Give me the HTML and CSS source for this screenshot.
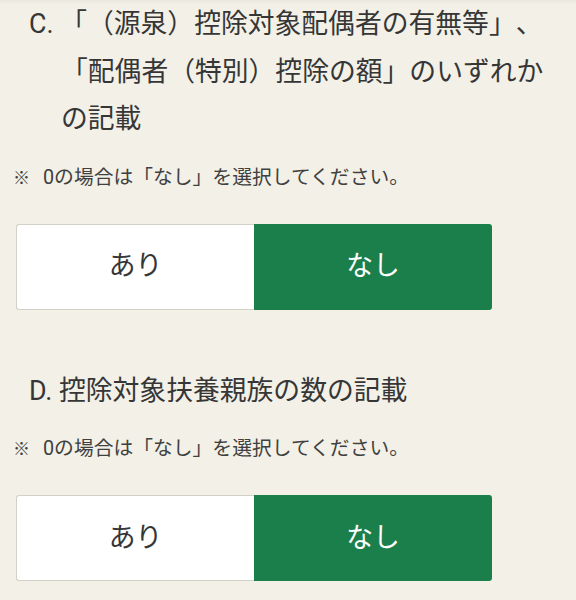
FILE: index.html
```html
<!DOCTYPE html>
<html lang="ja">
<head>
<meta charset="utf-8">
<link rel="stylesheet" href="styles.css">
</head>
<body>
<div class="page">
  <section class="item item-c">
    <h2 class="item-title">C. 「（源泉）控除対象配偶者の有無等」、「配偶者（特別）控除の額」のいずれかの記載</h2>
    <p class="note"><span class="mark">※</span>0の場合は「なし」を選択してください。</p>
    <div class="toggle">
      <button class="opt opt-yes" type="button">あり</button>
      <button class="opt opt-no selected" type="button">なし</button>
    </div>
  </section>
  <section class="item item-d">
    <h2 class="item-title">D. 控除対象扶養親族の数の記載</h2>
    <p class="note"><span class="mark">※</span>0の場合は「なし」を選択してください。</p>
    <div class="toggle">
      <button class="opt opt-yes" type="button">あり</button>
      <button class="opt opt-no selected" type="button">なし</button>
    </div>
  </section>
</div>
</body>
</html>
```

FILE: styles.css
```css
html, body {
  margin: 0;
  padding: 0;
}
body {
  background: #f2f0e7;
  color: #363636;
  font-family: Roboto, "Noto Sans CJK JP", sans-serif;
  text-spacing-trim: space-all;
}
.page {
  width: 576px;
  height: 600px;
  overflow: hidden;
  background: linear-gradient(#e9e7de 0, #f2f0e7 4px);
}
.item {
  display: flex;
  flex-direction: column;
}
.item-c {
  padding-top: 1px;
}
.item-d {
  padding-top: 58px;
}
.item-title {
  margin: 0;
  font-size: 26.8px;
  font-weight: 400;
  line-height: 47.5px;
  padding-left: 61px;
  padding-right: 20px;
  text-indent: -32px;
}
.note {
  margin: 20px 0 0;
  padding-left: 13px;
  font-size: 19.8px;
  line-height: 28px;
  color: #404040;
}
.mark {
  display: inline-block;
  width: 30px;
  font-size: 17px;
}
.toggle {
  display: flex;
  margin: 32px 0 0 16px;
  width: 476px;
  height: 86px;
}
.opt {
  flex: 1 1 50%;
  margin: 0;
  padding: 0;
  font-family: inherit;
  font-size: 26.8px;
  line-height: 1;
  cursor: pointer;
}
.opt-yes {
  background: #ffffff;
  color: #363636;
  border: 1.5px solid #d3d0c6;
  border-right: none;
  border-radius: 3px 0 0 3px;
}
.opt-no {
  background: #1b7f4b;
  color: #ffffff;
  border: none;
  border-radius: 0 3px 3px 0;
}
```
